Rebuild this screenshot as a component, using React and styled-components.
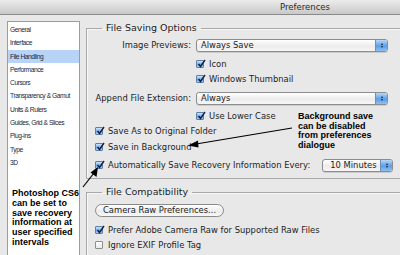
import React from "react";
import styled, { createGlobalStyle } from "styled-components";

const GlobalStyle = createGlobalStyle`
  html, body {
    margin: 0;
    padding: 0;
    background: #e8e8e8;
  }
  body {
    width: 400px;
    height: 255px;
    overflow: hidden;
    font-family: "DejaVu Sans", "Liberation Sans", sans-serif;
    color: #1c1c1c;
  }
`;

const Window = styled.div`
  position: relative;
  width: 400px;
  height: 255px;
  overflow: hidden;
  background: #e8e8e8;
`;

const TitleBar = styled.div`
  height: 14px;
  display: flex;
  align-items: center;
  justify-content: flex-end;
  padding-right: 70px;
  background: linear-gradient(#ececec, #c9c9c9);
  border-bottom: 1px solid #8a8a8a;
  font-size: 8.5px;
  color: #2a2a2a;
`;

const Body = styled.div`
  display: flex;
  gap: 6px;
  padding: 6px 0 0 7px;
`;

const Sidebar = styled.div`
  width: 73px;
  height: 260px;
  flex-shrink: 0;
  background: #fff;
  border: 1px solid #9c9c9c;
  box-sizing: border-box;
  padding-top: 1px;
`;

const NavItem = styled.div`
  height: 13.3px;
  line-height: 13.3px;
  padding-left: 2px;
  font-family: "Liberation Sans", Arial, sans-serif;
  font-size: 6.7px;
  letter-spacing: -0.45px;
  color: #1b1f3b;
  background: ${(p) => (p.$active ? "#b7d3f5" : "transparent")};
  white-space: nowrap;
  overflow: hidden;
`;

const SideNote = styled.div`
  margin-top: 20px;
  padding-left: 4px;
  font-family: "Liberation Sans", Arial, sans-serif;
  font-weight: bold;
  font-size: 9px;
  line-height: 9.7px;
  color: #000;
`;

const Main = styled.div`
  width: 340px;
  flex-shrink: 0;
  display: flex;
  flex-direction: column;
`;

const Group = styled.fieldset`
  margin: ${(p) => p.$top}px 0 0 0;
  padding: 0 0 ${(p) => p.$bottom}px 8px;
  border: 1px solid #a9a9a9;
  border-right: none;
  box-shadow: inset 1px 1px 0 #f6f6f6;
  min-width: 0;
`;

const Legend = styled.legend`
  margin-left: 7px;
  padding: 0 4px;
  font-size: 9.5px;
  line-height: 12px;
  color: #1c1c1c;
`;

const Row = styled.div`
  display: flex;
  align-items: center;
  height: 14px;
  margin-top: ${(p) => p.$mt || 0}px;
  padding-left: ${(p) => p.$indent || 0}px;
  font-size: 8.4px;
  white-space: nowrap;
`;

const Label = styled.span`
  width: 96px;
  text-align: right;
  margin-right: 5px;
  flex-shrink: 0;
`;

const Select = styled.div`
  display: flex;
  align-items: center;
  width: ${(p) => p.$w}px;
  height: 13px;
  margin-left: ${(p) => p.$ml || 0}px;
  box-sizing: border-box;
  border: 1px solid #8c8c8c;
  border-radius: 3px;
  background: linear-gradient(#ffffff, #ececec 55%, #f6f6f6);
  box-shadow: 0 1px 0 rgba(0, 0, 0, 0.12);
  overflow: hidden;
  font-size: 8.4px;
`;

const SelectText = styled.span`
  flex: 1;
  padding-left: ${(p) => p.$pad || 4}px;
`;

const Stepper = styled.span`
  width: 11px;
  height: 100%;
  display: flex;
  flex-direction: column;
  align-items: center;
  justify-content: center;
  gap: 1px;
  background: linear-gradient(#b9d7f7, #5d9de6 55%, #8cc0f2);
  border-left: 1px solid #6f8fb8;
`;

const Tri = styled.span`
  width: 0;
  height: 0;
  border-left: 1.5px solid transparent;
  border-right: 1.5px solid transparent;
  ${(p) =>
    p.$up ? "border-bottom: 2px solid #13233e;" : "border-top: 2px solid #13233e;"}
`;

const Box = styled.span`
  position: relative;
  width: 8px;
  height: 8px;
  flex-shrink: 0;
  margin-right: 5px;
  box-sizing: border-box;
  border: 1px solid ${(p) => (p.$on ? "#5f7fa8" : "#8e8e8e")};
  border-radius: 1px;
  background: ${(p) =>
    p.$on
      ? "linear-gradient(#d2e5fa, #6aa6e8 60%, #a9cff5)"
      : "linear-gradient(#ffffff, #e9e9e9)"};
`;

const Tick = styled.svg`
  position: absolute;
  left: 0px;
  top: -2px;
  width: 9px;
  height: 9px;
`;

const PillButton = styled.div`
  display: inline-flex;
  align-items: center;
  height: 13px;
  padding: 0 7px;
  box-sizing: border-box;
  border: 1px solid #8a8a8a;
  border-radius: 7px;
  background: linear-gradient(#ffffff, #ececec 55%, #f8f8f8);
  font-size: 8.4px;
`;

const Callout = styled.div`
  position: absolute;
  left: 298px;
  top: 112px;
  font-family: "Liberation Sans", Arial, sans-serif;
  font-weight: bold;
  font-size: 9px;
  line-height: 9.7px;
  color: #000;
`;

const Arrows = styled.svg`
  position: absolute;
  left: 0;
  top: 0;
  pointer-events: none;
`;

function Check({ on, children }) {
  return (
    <>
      <Box $on={on}>
        {on && (
          <Tick viewBox="0 0 9 9">
            <path d="M1.5 5 L3.5 7.5 L8 1" fill="none" stroke="#10213d" strokeWidth="1.4" />
          </Tick>
        )}
      </Box>
      <span>{children}</span>
    </>
  );
}

function PopUp({ w, ml, pad, children }) {
  return (
    <Select $w={w} $ml={ml}>
      <SelectText $pad={pad}>{children}</SelectText>
      <Stepper>
        <Tri $up />
        <Tri />
      </Stepper>
    </Select>
  );
}

const nav = [
  "General",
  "Interface",
  "File Handling",
  "Performance",
  "Cursors",
  "Transparency & Gamut",
  "Units & Rulers",
  "Guides, Grid & Slices",
  "Plug-ins",
  "Type",
  "3D",
];

export default function App() {
  return (
    <Window>
      <GlobalStyle />
      <TitleBar>Preferences</TitleBar>
      <Body>
        <Sidebar>
          {nav.map((n) => (
            <NavItem key={n} $active={n === "File Handling"}>
              {n}
            </NavItem>
          ))}
          <SideNote>
            Photoshop CS6
            <br />
            can be set to
            <br />
            save recovery
            <br />
            information at
            <br />
            user specified
            <br />
            intervals
          </SideNote>
        </Sidebar>
        <Main>
          <Group $top={1} $bottom={6}>
            <Legend>File Saving Options</Legend>
            <Row $mt={4}>
              <Label>Image Previews:</Label>
              <PopUp w={192}>Always Save</PopUp>
            </Row>
            <Row $mt={5} $indent={101}>
              <Check on>Icon</Check>
            </Row>
            <Row $mt={1} $indent={101}>
              <Check on>Windows Thumbnail</Check>
            </Row>
            <Row $mt={5}>
              <Label>Append File Extension:</Label>
              <PopUp w={192}>Always</PopUp>
            </Row>
            <Row $mt={4} $indent={101}>
              <Check on>Use Lower Case</Check>
            </Row>
            <Row $mt={1}>
              <Check on>Save As to Original Folder</Check>
            </Row>
            <Row $mt={2}>
              <Check on>Save in Background</Check>
            </Row>
            <Row $mt={4}>
              <Check on>Automatically Save Recovery Information Every:</Check>
              <PopUp w={71} ml={12} pad={7}>
                10 Minutes
              </PopUp>
            </Row>
          </Group>
          <Group $top={7} $bottom={20}>
            <Legend>File Compatibility</Legend>
            <Row $mt={5}>
              <PillButton>Camera Raw Preferences...</PillButton>
            </Row>
            <Row $mt={6}>
              <Check on>Prefer Adobe Camera Raw for Supported Raw Files</Check>
            </Row>
            <Row $mt={1}>
              <Check>Ignore EXIF Profile Tag</Check>
            </Row>
            <Row $mt={1}>
              <Check>Ignore Rotation Metadata</Check>
            </Row>
          </Group>
        </Main>
      </Body>
      <Callout>
        Background save
        <br />
        can be disabled
        <br />
        from preferences
        <br />
        dialogue
      </Callout>
      <Arrows width="400" height="255" viewBox="0 0 400 255">
        <line x1="292" y1="128" x2="196" y2="144" stroke="#000" strokeWidth="1.2" />
        <path d="M188 145.5 L198 140.5 L198.5 147.5 Z" fill="#000" />
        <line x1="83" y1="187" x2="94" y2="173" stroke="#000" strokeWidth="1.2" />
        <path d="M98 167 L96.5 177 L90.5 172.5 Z" fill="#000" />
      </Arrows>
    </Window>
  );
}
